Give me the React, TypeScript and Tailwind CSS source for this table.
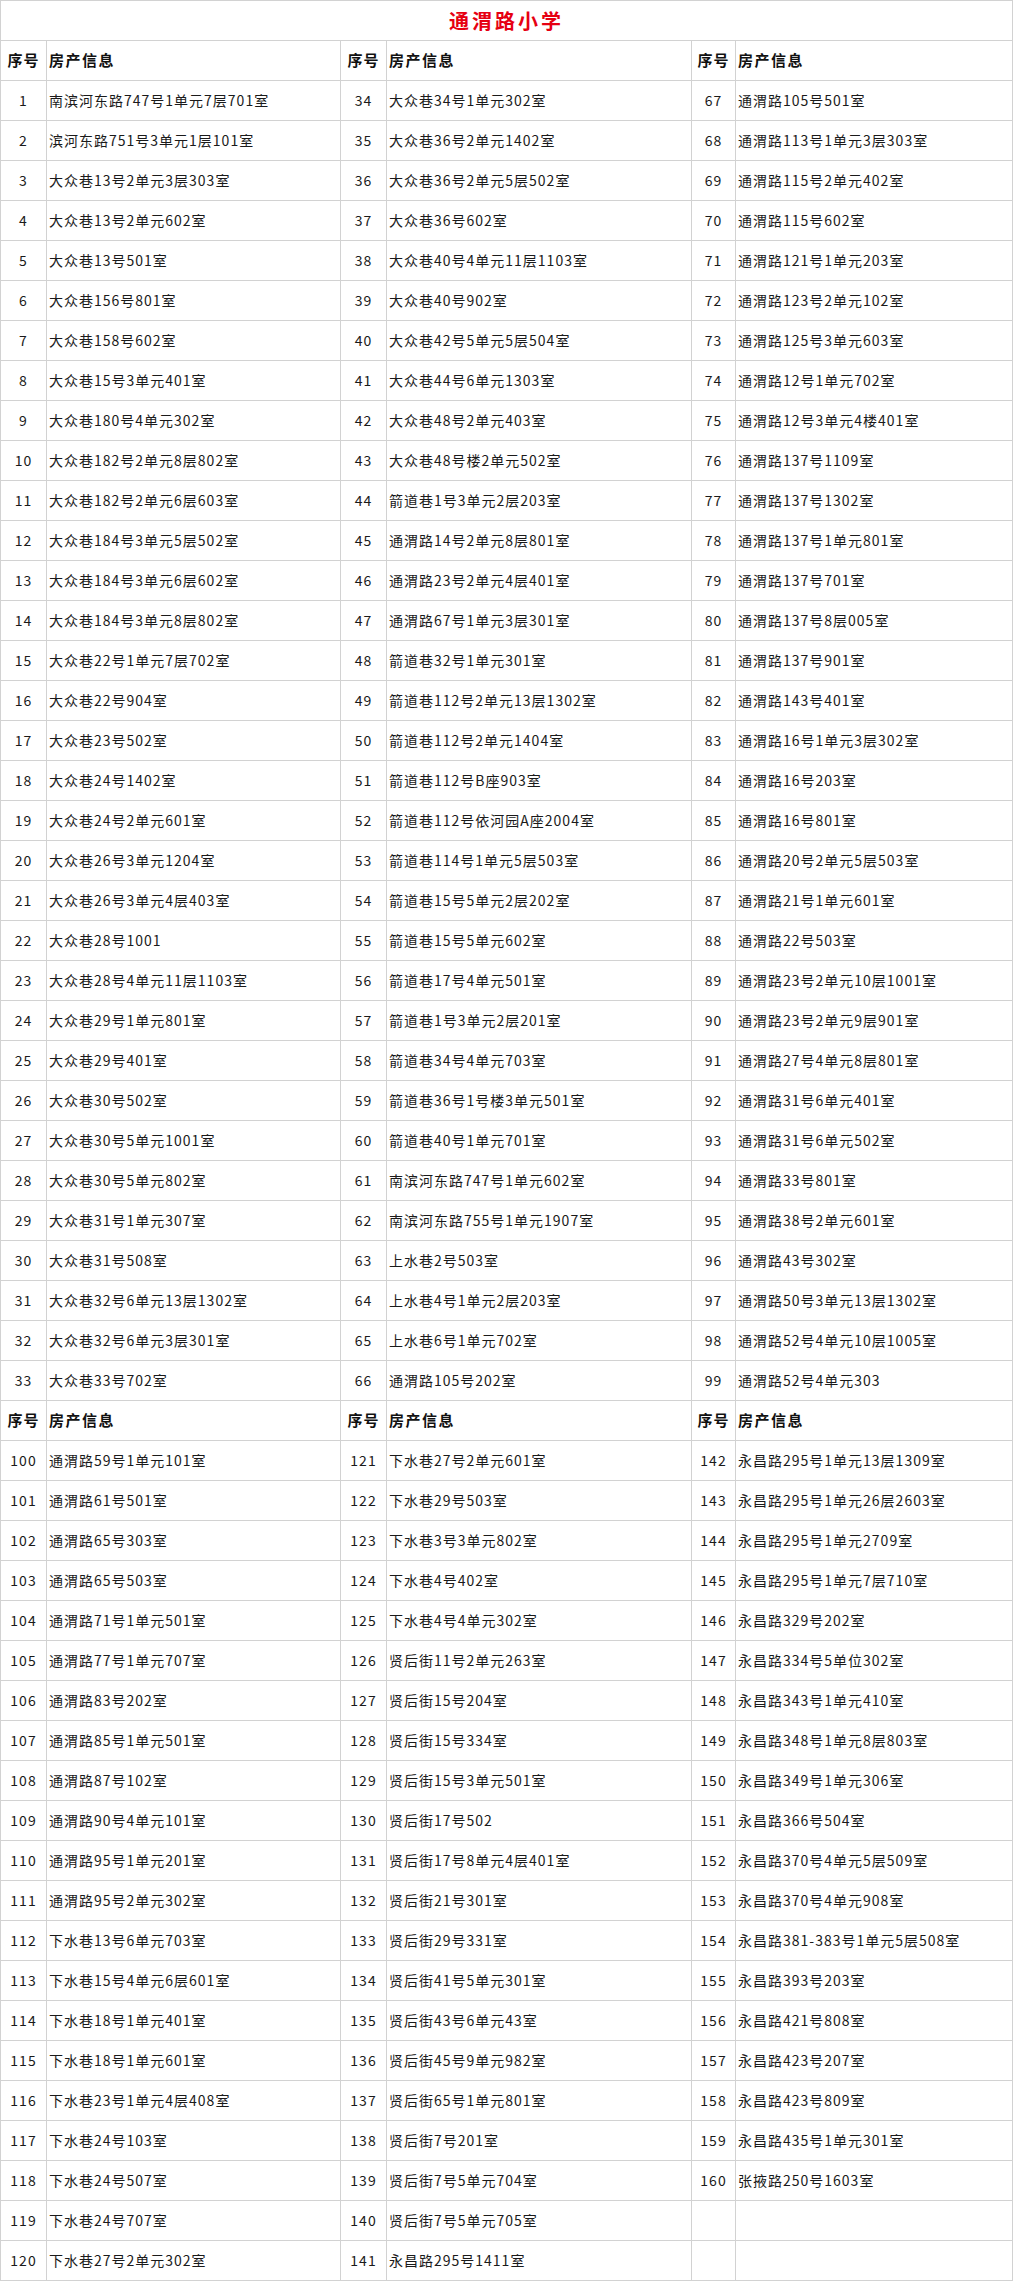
import React from "react";

type Item = [number, string];

const SECTION_ONE: string[][] = [
  [
    "南滨河东路747号1单元7层701室",
    "滨河东路751号3单元1层101室",
    "大众巷13号2单元3层303室",
    "大众巷13号2单元602室",
    "大众巷13号501室",
    "大众巷156号801室",
    "大众巷158号602室",
    "大众巷15号3单元401室",
    "大众巷180号4单元302室",
    "大众巷182号2单元8层802室",
    "大众巷182号2单元6层603室",
    "大众巷184号3单元5层502室",
    "大众巷184号3单元6层602室",
    "大众巷184号3单元8层802室",
    "大众巷22号1单元7层702室",
    "大众巷22号904室",
    "大众巷23号502室",
    "大众巷24号1402室",
    "大众巷24号2单元601室",
    "大众巷26号3单元1204室",
    "大众巷26号3单元4层403室",
    "大众巷28号1001",
    "大众巷28号4单元11层1103室",
    "大众巷29号1单元801室",
    "大众巷29号401室",
    "大众巷30号502室",
    "大众巷30号5单元1001室",
    "大众巷30号5单元802室",
    "大众巷31号1单元307室",
    "大众巷31号508室",
    "大众巷32号6单元13层1302室",
    "大众巷32号6单元3层301室",
    "大众巷33号702室",
  ],
  [
    "大众巷34号1单元302室",
    "大众巷36号2单元1402室",
    "大众巷36号2单元5层502室",
    "大众巷36号602室",
    "大众巷40号4单元11层1103室",
    "大众巷40号902室",
    "大众巷42号5单元5层504室",
    "大众巷44号6单元1303室",
    "大众巷48号2单元403室",
    "大众巷48号楼2单元502室",
    "箭道巷1号3单元2层203室",
    "通渭路14号2单元8层801室",
    "通渭路23号2单元4层401室",
    "通渭路67号1单元3层301室",
    "箭道巷32号1单元301室",
    "箭道巷112号2单元13层1302室",
    "箭道巷112号2单元1404室",
    "箭道巷112号B座903室",
    "箭道巷112号依河园A座2004室",
    "箭道巷114号1单元5层503室",
    "箭道巷15号5单元2层202室",
    "箭道巷15号5单元602室",
    "箭道巷17号4单元501室",
    "箭道巷1号3单元2层201室",
    "箭道巷34号4单元703室",
    "箭道巷36号1号楼3单元501室",
    "箭道巷40号1单元701室",
    "南滨河东路747号1单元602室",
    "南滨河东路755号1单元1907室",
    "上水巷2号503室",
    "上水巷4号1单元2层203室",
    "上水巷6号1单元702室",
    "通渭路105号202室",
  ],
  [
    "通渭路105号501室",
    "通渭路113号1单元3层303室",
    "通渭路115号2单元402室",
    "通渭路115号602室",
    "通渭路121号1单元203室",
    "通渭路123号2单元102室",
    "通渭路125号3单元603室",
    "通渭路12号1单元702室",
    "通渭路12号3单元4楼401室",
    "通渭路137号1109室",
    "通渭路137号1302室",
    "通渭路137号1单元801室",
    "通渭路137号701室",
    "通渭路137号8层005室",
    "通渭路137号901室",
    "通渭路143号401室",
    "通渭路16号1单元3层302室",
    "通渭路16号203室",
    "通渭路16号801室",
    "通渭路20号2单元5层503室",
    "通渭路21号1单元601室",
    "通渭路22号503室",
    "通渭路23号2单元10层1001室",
    "通渭路23号2单元9层901室",
    "通渭路27号4单元8层801室",
    "通渭路31号6单元401室",
    "通渭路31号6单元502室",
    "通渭路33号801室",
    "通渭路38号2单元601室",
    "通渭路43号302室",
    "通渭路50号3单元13层1302室",
    "通渭路52号4单元10层1005室",
    "通渭路52号4单元303",
  ],
];

const SECTION_TWO: string[][] = [
  [
    "通渭路59号1单元101室",
    "通渭路61号501室",
    "通渭路65号303室",
    "通渭路65号503室",
    "通渭路71号1单元501室",
    "通渭路77号1单元707室",
    "通渭路83号202室",
    "通渭路85号1单元501室",
    "通渭路87号102室",
    "通渭路90号4单元101室",
    "通渭路95号1单元201室",
    "通渭路95号2单元302室",
    "下水巷13号6单元703室",
    "下水巷15号4单元6层601室",
    "下水巷18号1单元401室",
    "下水巷18号1单元601室",
    "下水巷23号1单元4层408室",
    "下水巷24号103室",
    "下水巷24号507室",
    "下水巷24号707室",
    "下水巷27号2单元302室",
  ],
  [
    "下水巷27号2单元601室",
    "下水巷29号503室",
    "下水巷3号3单元802室",
    "下水巷4号402室",
    "下水巷4号4单元302室",
    "贤后街11号2单元263室",
    "贤后街15号204室",
    "贤后街15号334室",
    "贤后街15号3单元501室",
    "贤后街17号502",
    "贤后街17号8单元4层401室",
    "贤后街21号301室",
    "贤后街29号331室",
    "贤后街41号5单元301室",
    "贤后街43号6单元43室",
    "贤后街45号9单元982室",
    "贤后街65号1单元801室",
    "贤后街7号201室",
    "贤后街7号5单元704室",
    "贤后街7号5单元705室",
    "永昌路295号1411室",
  ],
  [
    "永昌路295号1单元13层1309室",
    "永昌路295号1单元26层2603室",
    "永昌路295号1单元2709室",
    "永昌路295号1单元7层710室",
    "永昌路329号202室",
    "永昌路334号5单位302室",
    "永昌路343号1单元410室",
    "永昌路348号1单元8层803室",
    "永昌路349号1单元306室",
    "永昌路366号504室",
    "永昌路370号4单元5层509室",
    "永昌路370号4单元908室",
    "永昌路381-383号1单元5层508室",
    "永昌路393号203室",
    "永昌路421号808室",
    "永昌路423号207室",
    "永昌路423号809室",
    "永昌路435号1单元301室",
    "张掖路250号1603室",
  ],
];

const FONT = { fontFamily: '"Noto Sans CJK SC", "Noto Sans", sans-serif' };

function toRows(cols: string[][], start: number, rowCount: number): (Item | null)[][] {
  const numbered: Item[][] = [];
  let n = start;
  for (const col of cols) {
    numbered.push(col.map((s) => [n++, s] as Item));
  }
  return Array.from({ length: rowCount }, (_, r) => numbered.map((col) => col[r] ?? null));
}

function HeaderRow() {
  return (
    <>
      {[0, 1, 2].map((i) => (
        <React.Fragment key={i}>
          <div className="bg-white flex items-center justify-center text-[15px] font-bold tracking-[1px] text-[#111]">
            序号
          </div>
          <div className="bg-white flex items-center pl-[2px] text-[15px] font-bold tracking-[1.5px] text-[#111]">
            房产信息
          </div>
        </React.Fragment>
      ))}
    </>
  );
}

function DataRows({ rows }: { rows: (Item | null)[][] }) {
  return (
    <>
      {rows.map((row, r) =>
        row.map((cell, c) => (
          <React.Fragment key={`${r}-${c}`}>
            <div className="bg-white flex items-center justify-center text-[14px] tracking-[1px] text-[#1a1a1a]">
              {cell ? cell[0] : ""}
            </div>
            <div className="bg-white flex items-center pl-[2px] text-[14px] tracking-[1px] text-[#1a1a1a] whitespace-nowrap overflow-hidden">
              {cell ? cell[1] : ""}
            </div>
          </React.Fragment>
        ))
      )}
    </>
  );
}

export default function App() {
  const first = toRows(SECTION_ONE, 1, 33);
  const second = toRows(SECTION_TWO, 100, 21);

  return (
    <div className="bg-white min-h-screen" style={FONT}>
      <div className="w-[1013px] grid grid-cols-[45px_293px_45px_304px_43px_276px] auto-rows-[39px] gap-px p-px bg-[#d2d2d2]">
        <div className="col-span-6 bg-white flex items-center justify-center text-[20px] font-bold tracking-[3px] text-[#e60012]">
          通渭路小学
        </div>
        <HeaderRow />
        <DataRows rows={first} />
        <HeaderRow />
        <DataRows rows={second} />
      </div>
    </div>
  );
}
